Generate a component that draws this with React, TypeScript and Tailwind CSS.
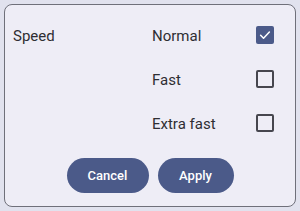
import React, { useState } from "react";

const options = ["Normal", "Fast", "Extra fast"];

function Box({ checked }: { checked: boolean }) {
  return checked ? (
    <div className="w-[18px] h-[18px] rounded-[2px] bg-[#4b5a89] flex items-center justify-center">
      <svg width="14" height="14" viewBox="0 0 24 24" fill="none">
        <path d="M4.5 12.5l5 5L19.5 7" stroke="white" strokeWidth="2.6" strokeLinecap="round" strokeLinejoin="round" />
      </svg>
    </div>
  ) : (
    <div className="w-[18px] h-[18px] rounded-[2px] border-2 border-[#46464e]" />
  );
}

export default function App() {
  const [sel, setSel] = useState([true, false, false]);
  return (
    <div className="w-[300px] h-[211px] bg-[#e1e2ee] p-[4px]" style={{ fontFamily: "Roboto, sans-serif" }}>
      <div className="w-[292px] h-[203px] rounded-[8px] border border-[#6f707a] bg-[#eeedf6] pt-[8px] flex flex-col">
        <div className="flex">
          <div className="w-[147px] pl-[8px] pt-[2px] h-[44px] flex items-center text-[15px] text-[#2e2e33]">Speed</div>
          <div className="flex flex-col w-[122px]">
            {options.map((o, i) => (
              <div
                key={o}
                className="h-[44px] flex items-center justify-between text-[15px] text-[#2e2e33] cursor-pointer"
                onClick={() => setSel(sel.map((v, j) => (j === i ? !v : v)))}
              >
                <span className="pt-[2px]">{o}</span>
                <Box checked={sel[i]} />
              </div>
            ))}
          </div>
        </div>
        <div className="flex justify-center gap-[9px] mt-[13px]">
          <button className="w-[82px] h-[35px] rounded-full bg-[#4b5a89] text-white text-[13px] font-medium">Cancel</button>
          <button className="w-[76px] h-[35px] rounded-full bg-[#4b5a89] text-white text-[13px] font-medium">Apply</button>
        </div>
      </div>
    </div>
  );
}
